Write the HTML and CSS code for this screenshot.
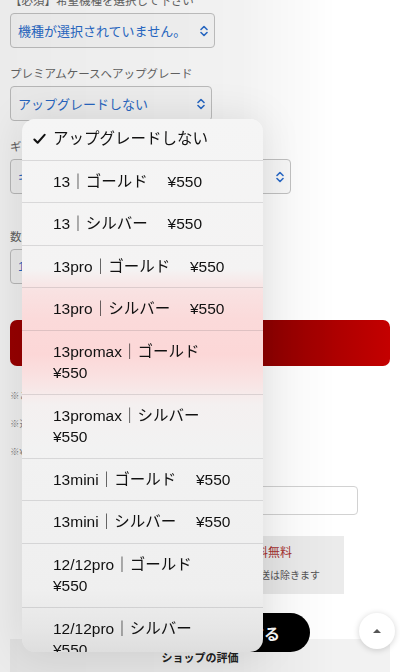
FILE: index.html
```html
<!DOCTYPE html>
<html lang="ja">
<head>
    <meta charset="UTF-8">
    <title>商品オプション選択</title>
    <meta name="viewport" content="width=device-width, initial-scale=1">
    <link rel="stylesheet" href="styles.css">
</head>
<body>
    <main class="page">
        <p class="field-label first">【必須】希望機種を選択して下さい</p>
        <div class="select w-model">
            <span>機種が選択されていません。</span>
            <svg class="chevron" viewBox="0 0 8 12"><path d="M1 4.5 4 1.5 7 4.5M1 7.5 4 10.5 7 7.5"/></svg>
        </div>

        <p class="field-label">プレミアムケースへアップグレード</p>
        <div class="select w-case">
            <span>アップグレードしない</span>
            <svg class="chevron" viewBox="0 0 8 12"><path d="M1 4.5 4 1.5 7 4.5M1 7.5 4 10.5 7 7.5"/></svg>
        </div>

        <p class="field-label">ギフトラッピング</p>
        <div class="select w-gift">
            <span>ギフトラッピングなし</span>
            <svg class="chevron" viewBox="0 0 8 12"><path d="M1 4.5 4 1.5 7 4.5M1 7.5 4 10.5 7 7.5"/></svg>
        </div>

        <p class="field-label spaced">数量</p>
        <div class="select w-qty">
            <span>1</span>
            <svg class="chevron" viewBox="0 0 8 12"><path d="M1 4.5 4 1.5 7 4.5M1 7.5 4 10.5 7 7.5"/></svg>
        </div>

        <button class="cart-btn">カートに入れる</button>

        <ul class="notes">
            <li>※こちらの商品はご注文確定後のキャンセルはできません</li>
            <li>※送料は全国一律でお届けいたします</li>
            <li>※¥550のオプションは別途加算されます</li>
        </ul>

        <div class="memo-input"></div>

        <div class="shipping">
            <p class="free">税込3,980円以上のお買い上げで送料無料</p>
            <p class="except">※北海道・沖縄・離島など一部地域への配送は除きます</p>
        </div>

        <div class="review-bar">ショップの評価</div>
    </main>

    <button class="fav-btn">お気に入りに登録する</button>
    <button class="to-top"><span class="tri"></span></button>

    <div class="scrim"></div>

    <ul class="picker">
        <li class="option"><svg class="check" viewBox="0 0 14 12"><path d="M1.5 6.5 5 10 12.5 1.5"/></svg><span>アップグレードしない</span></li>
        <li class="option"><i></i><span>13｜ゴールド　 ¥550</span></li>
        <li class="option"><i></i><span>13｜シルバー　 ¥550</span></li>
        <li class="option"><i></i><span>13pro｜ゴールド　 ¥550</span></li>
        <li class="option"><i></i><span>13pro｜シルバー　 ¥550</span></li>
        <li class="option"><i></i><span>13promax｜ゴールド　 ¥550</span></li>
        <li class="option"><i></i><span>13promax｜シルバー　 ¥550</span></li>
        <li class="option"><i></i><span>13mini｜ゴールド　 ¥550</span></li>
        <li class="option"><i></i><span>13mini｜シルバー　 ¥550</span></li>
        <li class="option"><i></i><span>12/12pro｜ゴールド　 ¥550</span></li>
        <li class="option"><i></i><span>12/12pro｜シルバー　 ¥550</span></li>
        <li class="option"><i></i><span>12mini｜ゴールド　 ¥550</span></li>
    </ul>
</body>
</html>
```

FILE: styles.css
```css
* {
    box-sizing: border-box;
}
html, body {
    margin: 0;
    padding: 0;
    background: #fff;
    overflow: hidden;
}
body, button {
    font-family: "Liberation Sans", "Noto Sans CJK JP", sans-serif;
}
.page {
    padding: 0 10px;
}
.field-label {
    margin: 19px 0 5px;
    font-size: 11.5px;
    line-height: 14px;
    color: #666;
}
.field-label.first {
    margin-top: -6px;
}
.select {
    display: flex;
    align-items: center;
    justify-content: space-between;
    height: 35px;
    padding: 0 6px 0 7px;
    border: 1px solid #c4c4c4;
    border-radius: 4px;
    background: #fbfbfb;
    color: #2b6dcc;
    font-size: 13px;
}
.select + .field-label {
    margin-top: 19px;
}
.select + .field-label.spaced {
    margin-top: 36px;
}
.w-model { width: 205px; }
.w-case { width: 202px; }
.w-gift { width: 281px; }
.w-qty { width: 200px; }
.chevron {
    width: 8px;
    height: 12px;
    fill: none;
    stroke: #2b6dcc;
    stroke-width: 1.6;
    stroke-linecap: round;
    stroke-linejoin: round;
}
.cart-btn {
    display: block;
    width: 100%;
    height: 46px;
    margin-top: 36px;
    border: 0;
    border-radius: 7px;
    background: linear-gradient(to right, #a20000 0%, #8e0000 66%, #c40000 100%);
    color: #fff;
    font-size: 16px;
    font-weight: bold;
}
.notes {
    list-style: none;
    margin: 16px 0 0;
    padding: 0;
}
.notes li {
    font-size: 9.5px;
    line-height: 28px;
    color: #8a8a8a;
    white-space: nowrap;
}
.memo-input {
    height: 29px;
    margin: 20px 32px 0;
    border: 1px solid #d2d2d2;
    border-radius: 4px;
    background: #fff;
}
.shipping {
    height: 58px;
    margin: 21px 46px 0;
    padding: 9px 14px 0;
    background: #ebebeb;
}
.shipping p {
    margin: 0;
    white-space: nowrap;
}
.free {
    font-size: 12px;
    line-height: 16px;
    color: #a83232;
}
.except {
    margin-top: 8px !important;
    font-size: 10px;
    line-height: 14px;
    color: #555;
}
.review-bar {
    margin-top: 45px;
    padding: 11px 0 14px;
    background: #f2f2f2;
    text-align: center;
    font-size: 11px;
    line-height: 16px;
    font-weight: bold;
    color: #222;
}
.fav-btn {
    position: fixed;
    left: 90px;
    bottom: 20px;
    width: 220px;
    height: 39px;
    border: 0;
    border-radius: 20px;
    background: #000;
    color: #fff;
    font-size: 16px;
    font-weight: bold;
    z-index: 5;
}
.to-top {
    position: fixed;
    left: 359px;
    top: 613px;
    width: 36px;
    height: 36px;
    padding: 0;
    border: 0;
    border-radius: 50%;
    background: #fff;
    box-shadow: 0 1px 6px rgba(0, 0, 0, 0.18);
    display: flex;
    align-items: center;
    justify-content: center;
    z-index: 5;
}
.tri {
    width: 0;
    height: 0;
    border-left: 4px solid transparent;
    border-right: 4px solid transparent;
    border-bottom: 4px solid #555;
}
.scrim {
    position: fixed;
    inset: 0;
    z-index: 8;
    background: linear-gradient(to right, rgba(0, 0, 0, 0.08) 0%, rgba(0, 0, 0, 0.05) 60%, rgba(0, 0, 0, 0) 84%);
}
.picker {
    position: absolute;
    left: 22px;
    top: 119px;
    width: 241px;
    height: 533px;
    margin: 0;
    padding: 0;
    list-style: none;
    overflow: hidden;
    border-radius: 13px;
    background: linear-gradient(to bottom,
        #f5f5f5 0px,
        #f4f3f3 150px,
        #f9e2e2 172px,
        #fbdada 200px,
        #fcd7d7 235px,
        #f9e3e3 262px,
        #f4f0f0 285px,
        #f2f2f2 330px,
        #efefef 470px,
        #e6e6e6 510px,
        #dedede 533px);
    box-shadow: 0 0 40px rgba(0, 0, 0, 0.1);
    z-index: 10;
}
.option {
    display: grid;
    grid-template-columns: 31px 1fr;
    padding: 10px 25px 10px 0;
    border-bottom: 1px solid rgba(60, 60, 67, 0.15);
    font-size: 15.5px;
    line-height: 21.5px;
    color: #111;
}
.option:first-child {
    padding-top: 9px;
}
.check {
    width: 13px;
    height: 12px;
    margin: 5px 0 0 11px;
    fill: none;
    stroke: #111;
    stroke-width: 2.2;
    stroke-linecap: round;
    stroke-linejoin: round;
}
```
